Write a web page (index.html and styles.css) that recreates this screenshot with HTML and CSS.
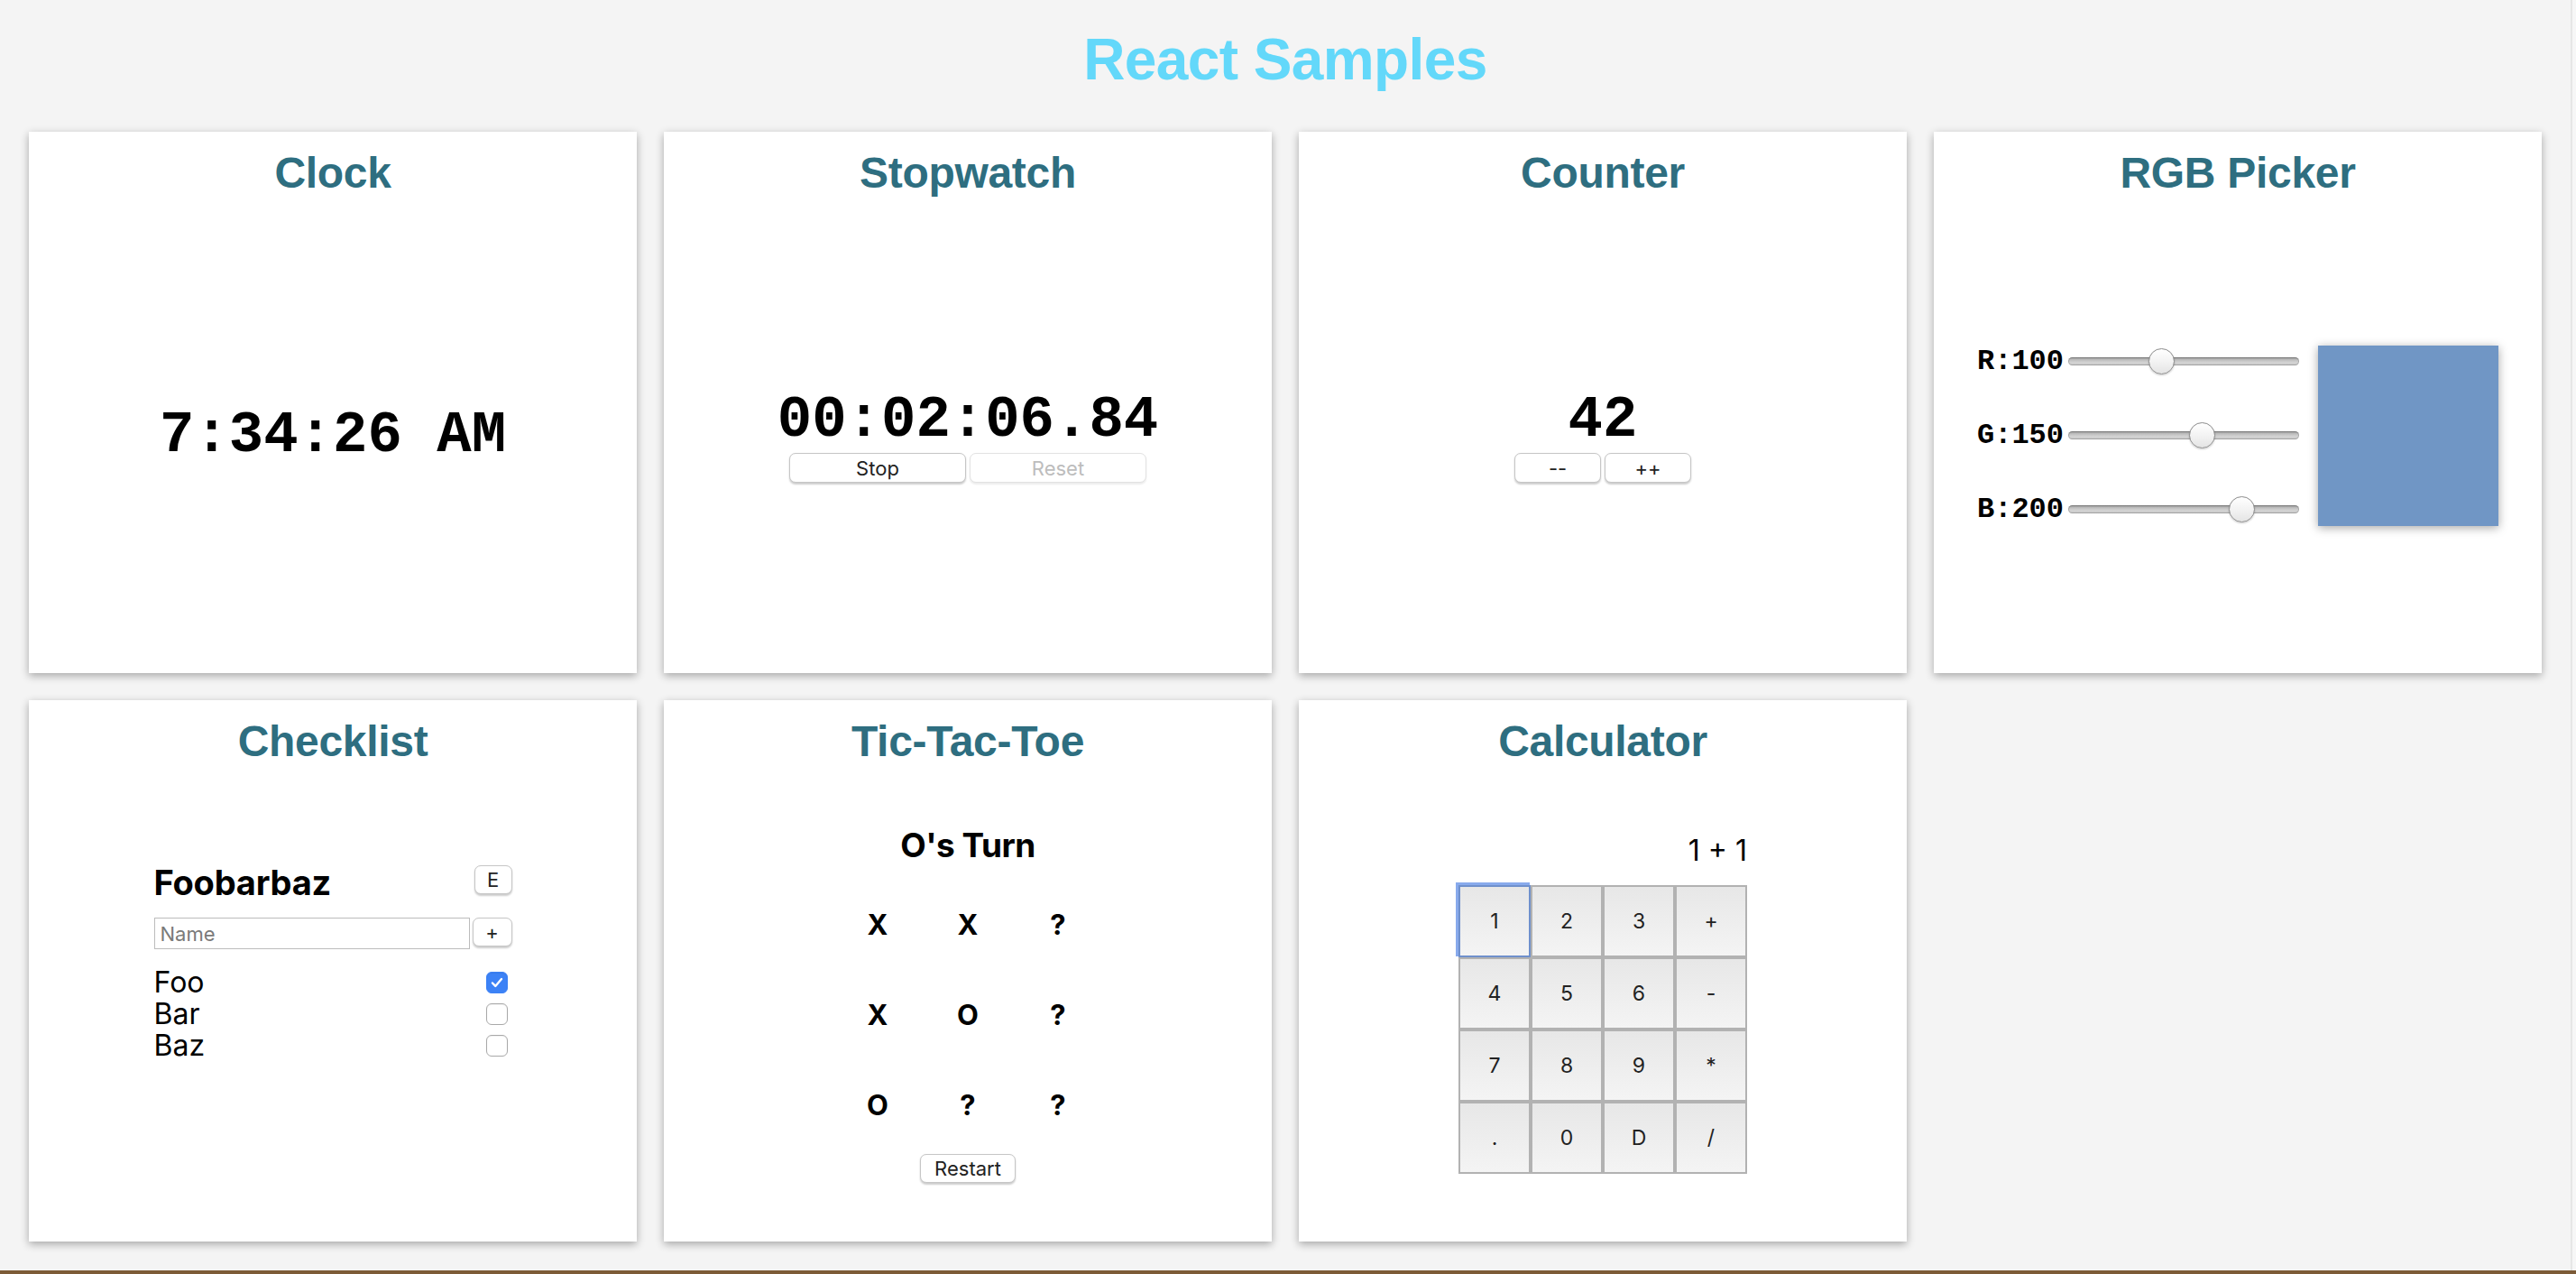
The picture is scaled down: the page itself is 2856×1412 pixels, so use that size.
FILE: index.html
```html
<!DOCTYPE html>
<html lang="en">
<head>
<meta charset="utf-8">
<title>React Samples</title>
<link rel="stylesheet" href="styles.css">
</head>
<body>
<div class="screen">
  <main class="window">
    <h1 class="page-title">React Samples</h1>
    <div class="grid">
      <section class="card">
        <h2 class="card-title">Clock</h2>
        <div class="card-body">
          <div class="mono big">7:34:26 AM</div>
        </div>
      </section>

      <section class="card">
        <h2 class="card-title">Stopwatch</h2>
        <div class="card-body">
          <div class="stack">
            <div class="mono big">00:02:06.84</div>
            <div class="btn-row">
              <button class="btn btn-wide">Stop</button>
              <button class="btn btn-wide" disabled>Reset</button>
            </div>
          </div>
        </div>
      </section>

      <section class="card">
        <h2 class="card-title">Counter</h2>
        <div class="card-body">
          <div class="stack">
            <div class="mono big">42</div>
            <div class="btn-row">
              <button class="btn btn-half">--</button>
              <button class="btn btn-half">++</button>
            </div>
          </div>
        </div>
      </section>

      <section class="card">
        <h2 class="card-title">RGB Picker</h2>
        <div class="card-body">
          <div class="rgb">
            <div class="rgb-sliders">
              <label class="rgb-row"><span class="mono rgb-label">R:100</span><input class="slider" type="range" min="0" max="255" value="100"></label>
              <label class="rgb-row"><span class="mono rgb-label">G:150</span><input class="slider" type="range" min="0" max="255" value="150"></label>
              <label class="rgb-row"><span class="mono rgb-label">B:200</span><input class="slider" type="range" min="0" max="255" value="200"></label>
            </div>
            <div class="swatch"></div>
          </div>
        </div>
      </section>

      <section class="card">
        <h2 class="card-title">Checklist</h2>
        <div class="card-body card-body-top">
          <div class="checklist">
            <div class="cl-head">
              <h3 class="cl-title">Foobarbaz</h3>
              <button class="btn btn-small">E</button>
            </div>
            <div class="cl-add">
              <input class="cl-input" type="text" placeholder="Name">
              <button class="btn btn-small btn-plus">+</button>
            </div>
            <ul class="cl-list">
              <li class="cl-item"><span>Foo</span><span class="check checked"><svg viewBox="0 0 24 24" width="24" height="24"><path d="M6.5 12.5l3.6 3.8 7.4-8.6" fill="none" stroke="#fff" stroke-width="2.6" stroke-linecap="round" stroke-linejoin="round"/></svg></span></li>
              <li class="cl-item"><span>Bar</span><span class="check"></span></li>
              <li class="cl-item"><span>Baz</span><span class="check"></span></li>
            </ul>
          </div>
        </div>
      </section>

      <section class="card">
        <h2 class="card-title">Tic-Tac-Toe</h2>
        <div class="card-body">
          <div class="stack">
            <h3 class="ttt-status">O's Turn</h3>
            <div class="ttt-board">
              <div class="ttt-cell">X</div>
              <div class="ttt-cell">X</div>
              <div class="ttt-cell">?</div>
              <div class="ttt-cell">X</div>
              <div class="ttt-cell">O</div>
              <div class="ttt-cell">?</div>
              <div class="ttt-cell">O</div>
              <div class="ttt-cell">?</div>
              <div class="ttt-cell">?</div>
            </div>
            <button class="btn btn-restart">Restart</button>
          </div>
        </div>
      </section>

      <section class="card">
        <h2 class="card-title">Calculator</h2>
        <div class="card-body">
          <div class="calc">
            <div class="calc-display">1 + 1</div>
            <div class="calc-keys">
              <button class="key key-focus">1</button>
              <button class="key">2</button>
              <button class="key">3</button>
              <button class="key">+</button>
              <button class="key">4</button>
              <button class="key">5</button>
              <button class="key">6</button>
              <button class="key">-</button>
              <button class="key">7</button>
              <button class="key">8</button>
              <button class="key">9</button>
              <button class="key">*</button>
              <button class="key">.</button>
              <button class="key">0</button>
              <button class="key">D</button>
              <button class="key">/</button>
            </div>
          </div>
        </div>
      </section>
    </div>
  </main>
  <div class="edge"></div>
</div>
<div class="desk"></div>
</body>
</html>
```

FILE: styles.css
```css
* { box-sizing: border-box; }

html, body {
  margin: 0;
  padding: 0;
}

body {
  width: 2856px;
  height: 1412px;
  overflow: hidden;
  background: #f4f4f4;
  font-family: "Liberation Sans", Arial, sans-serif;
  color: #000;
}

.screen {
  display: flex;
  height: 1408px;
}

.window {
  width: 2850px;
  height: 1408px;
  background: #f4f4f4;
}

.edge {
  width: 6px;
  border-left: 2px solid #e6e6e6;
  background: #f6f6f6;
}

.desk {
  height: 4px;
  background: #7c5b37;
}

.page-title {
  margin: 29px 0 43px;
  font-family: "Liberation Sans", Arial, sans-serif;
  font-size: 64px;
  line-height: 74px;
  font-weight: 700;
  color: #63d8fa;
  text-align: center;
  letter-spacing: -0.6px;
}

.grid {
  display: grid;
  grid-template-columns: repeat(4, 674px);
  grid-auto-rows: 600px;
  gap: 30px;
  padding: 0 32px;
}

.card {
  background: #fff;
  box-shadow: 0 3px 9px rgba(0, 0, 0, 0.32);
  display: flex;
  flex-direction: column;
}

.card-title {
  margin: 0;
  padding-top: 18px;
  font-size: 48px;
  line-height: 55px;
  font-weight: 700;
  color: #2e6e80;
  text-align: center;
  letter-spacing: -0.3px;
}

.card-body {
  flex: 1;
  display: flex;
  align-items: center;
  justify-content: center;
}

.card-body-top {
  align-items: flex-start;
  padding-top: 108px;
}

.mono {
  font-family: "Liberation Mono", "Courier New", monospace;
  font-weight: 700;
}

.big {
  font-size: 64px;
  line-height: 72px;
  text-align: center;
}

.stack {
  display: flex;
  flex-direction: column;
  align-items: center;
}

.btn-row {
  display: flex;
  gap: 4px;
}

.btn {
  font-family: Inter, "Noto Sans", sans-serif;
  font-size: 22px;
  color: #222;
  background: #fff;
  border: 1.5px solid #c6c6c6;
  border-radius: 7px;
  box-shadow: 0 1.5px 2px rgba(0, 0, 0, 0.2);
  padding: 0;
  margin: 0;
  line-height: 1;
}

.btn:disabled {
  color: #bdbdbd;
  border-color: #e2e2e2;
  box-shadow: 0 1.5px 2px rgba(0, 0, 0, 0.08);
}

.btn-wide {
  width: 196px;
  height: 33px;
}

.btn-half {
  width: 96px;
  height: 33px;
}

/* RGB picker */
.rgb {
  display: flex;
  align-items: center;
  gap: 21px;
}

.rgb-sliders {
  height: 200px;
  display: flex;
  flex-direction: column;
  justify-content: space-between;
}

.rgb-row {
  display: flex;
  align-items: center;
  gap: 5px;
  height: 36px;
}

.rgb-label {
  font-size: 32px;
  line-height: 36px;
}

.slider {
  -webkit-appearance: none;
  appearance: none;
  width: 256px;
  height: 30px;
  margin: 0;
  padding: 0;
  background: transparent;
}

.slider::-webkit-slider-runnable-track {
  height: 9px;
  border-radius: 5px;
  background: linear-gradient(#8f8f8f, #bdbdbd 30%, #d4d4d4 65%, #c4c4c4);
  box-shadow: inset 0 0 0 1px rgba(0, 0, 0, 0.18);
}

.slider::-webkit-slider-thumb {
  -webkit-appearance: none;
  appearance: none;
  width: 29px;
  height: 29px;
  margin-top: -10px;
  border-radius: 50%;
  border: 1.5px solid #8c8c8c;
  background: linear-gradient(#ffffff, #f3f3f3 50%, #e4e4e4);
  box-shadow: 0 1px 2px rgba(0, 0, 0, 0.2);
}

.swatch {
  width: 200px;
  height: 200px;
  background: #7096c5;
  box-shadow: 0 2px 10px rgba(0, 0, 0, 0.35);
}

/* Checklist */
.checklist {
  width: 397px;
  font-family: Inter, "Noto Sans", sans-serif;
}

.cl-head {
  display: flex;
  justify-content: space-between;
  align-items: flex-start;
}

.cl-title {
  margin: 0;
  font-size: 38px;
  line-height: 43px;
  font-weight: 700;
  letter-spacing: -0.2px;
}

.btn-small {
  width: 42px;
  height: 32px;
  margin-top: 2px;
}

.cl-add {
  display: flex;
  justify-content: space-between;
  align-items: flex-start;
  margin-top: 17px;
}

.cl-input {
  width: 350px;
  height: 35px;
  border: 1.5px solid #bcbcbc;
  border-radius: 0;
  padding: 0 6px;
  font-family: Inter, "Noto Sans", sans-serif;
  font-size: 22px;
  color: #222;
  background: #fff;
}

.cl-input::placeholder {
  color: #7a7a7a;
}

.btn-plus {
  width: 44px;
  margin-top: 0;
}

.cl-list {
  list-style: none;
  margin: 19px 0 0;
  padding: 0 5px 0 0;
}

.cl-item {
  display: flex;
  justify-content: space-between;
  align-items: center;
  font-size: 32px;
  line-height: 35px;
}

.check {
  width: 24px;
  height: 24px;
  border-radius: 6px;
  border: 1.5px solid #a9a9a9;
  background: #fff;
  display: flex;
  align-items: center;
  justify-content: center;
  box-shadow: inset 0 1px 1px rgba(0, 0, 0, 0.06);
}

.check.checked {
  background: #3c82f6;
  border-color: #3c82f6;
}

.check svg {
  display: block;
}

/* Tic-tac-toe */
.ttt-status {
  margin: 0 0 17px;
  font-family: Inter, "Noto Sans", sans-serif;
  font-size: 37px;
  line-height: 43px;
  font-weight: 700;
  letter-spacing: -0.5px;
}

.ttt-board {
  display: grid;
  grid-template-columns: repeat(3, 100px);
  grid-auto-rows: 100px;
}

.ttt-cell {
  display: flex;
  align-items: center;
  justify-content: center;
  font-family: Inter, "Noto Sans", sans-serif;
  font-weight: 700;
  font-size: 31px;
}

.btn-restart {
  width: 106px;
  height: 32px;
  margin-top: 4px;
}

/* Calculator */
.calc {
  width: 320px;
  font-family: Inter, "Noto Sans", sans-serif;
}

.calc-display {
  text-align: right;
  font-size: 32px;
  line-height: 37px;
  margin-bottom: 20px;
}

.calc-keys {
  display: grid;
  grid-template-columns: repeat(4, 80px);
  grid-auto-rows: 80px;
}

.key {
  margin: 0;
  padding: 0;
  border: 2px solid #b2b2b2;
  background: linear-gradient(#e7e7e7, #f4f4f4);
  font-family: Inter, "Noto Sans", sans-serif;
  font-size: 23px;
  color: #222;
}

.key-focus {
  border-color: #6f90cc;
  box-shadow: -2px -2px 0 1px #88aaec;
  position: relative;
  z-index: 1;
}
```
